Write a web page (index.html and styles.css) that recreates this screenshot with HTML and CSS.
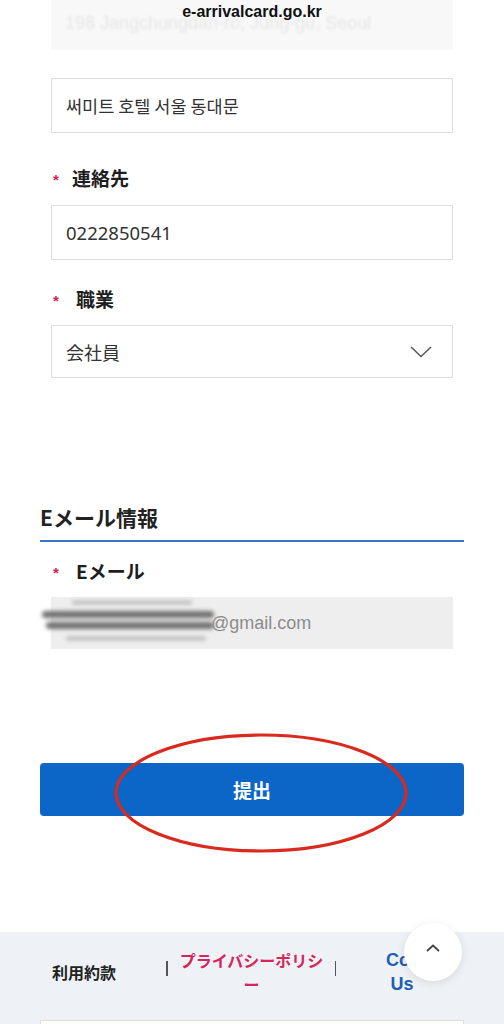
FILE: index.html
```html
<!DOCTYPE html>
<html lang="ja">
<head>
<meta charset="utf-8">
<link rel="stylesheet" href="styles.css">
</head>
<body>
<div class="url-bar">e-arrivalcard.go.kr</div>
<main class="page">
  <div class="fields">
    <div class="field field-disabled"><span class="faded">198 Jangchungdan-ro, Jung-gu, Seoul</span></div>
    <div class="field field-first"><span class="kr">써미트 호텔 서울 동대문</span></div>

    <div class="label label-contact"><span class="req">*</span><span>連絡先</span></div>
    <div class="field"><span class="num">0222850541</span></div>

    <div class="label label-job"><span class="req">*</span><span class="job-text">職業</span></div>
    <div class="field field-select">
      <span>会社員</span>
      <svg class="chev" width="22" height="12" viewBox="0 0 22 12"><path d="M1 1 L11 10.5 L21 1" fill="none" stroke="#5a5a5a" stroke-width="1.6"/></svg>
    </div>
  </div>

  <h2 class="section-title">Eメール情報</h2>

  <div class="fields">
    <div class="label label-email"><span class="req">*</span><span class="email-text">Eメール</span></div>
    <div class="field field-email">
      <div class="smear">
        <span class="bar bar-faint bar-a"></span>
        <span class="bar bar-dark bar-b"></span>
        <span class="bar bar-dark bar-c"></span>
        <span class="bar bar-faint bar-d"></span>
      </div>
      <span class="email-domain">@gmail.com</span>
    </div>
  </div>

  <div class="submit-wrap">
    <button class="submit">提出</button>
    <svg class="circle-mark" width="300" height="124" viewBox="0 0 300 124"><ellipse cx="150" cy="62" rx="145" ry="58" fill="none" stroke="#d92a1e" stroke-width="3.2"/></svg>
  </div>
</main>

<footer class="footer">
  <div class="links">
    <a class="link link-terms">利用約款</a>
    <span class="sep sep-1"></span>
    <a class="link link-privacy">プライバシーポリシー</a>
    <span class="sep sep-2"></span>
    <a class="link link-contact">Contact Us</a>
  </div>
  <div class="bottom-box"></div>
  <button class="to-top"><svg width="16" height="10" viewBox="0 0 16 10"><path d="M2 8 L8 2.5 L14 8" fill="none" stroke="#444" stroke-width="1.8"/></svg></button>
</footer>
</body>
</html>
```

FILE: styles.css
```css
* { box-sizing: border-box; }
html, body { margin: 0; padding: 0; background: #ffffff; }
body {
  width: 504px;
  height: 1024px;
  overflow: hidden;
  position: relative;
  font-family: "Noto Sans CJK JP", "Noto Sans", sans-serif;
  color: #222;
}

.url-bar {
  position: absolute;
  top: 2px;
  left: 0;
  width: 504px;
  text-align: center;
  font-family: "Liberation Sans", Arial, sans-serif;
  font-weight: 700;
  font-size: 16px;
  line-height: 20px;
  color: #111;
  z-index: 5;
}

.page { padding: 0 40px; }
.fields { padding: 0 11px; }

.field {
  height: 55px;
  border: 1.5px solid #dedede;
  background: #fff;
  display: flex;
  align-items: center;
  padding: 0 14px;
  font-size: 18px;
  color: #333;
}
.field-disabled {
  height: 50px;
  border: none;
  background: #f8f8f8;
  padding-bottom: 4px;
}
.faded {
  font-family: "Liberation Sans", Arial, sans-serif;
  color: #e6e6e6;
  font-size: 18px;
  filter: blur(1.2px);
}
.field-first { margin-top: 28px; }
.kr { font-family: "Noto Sans CJK KR", sans-serif; font-size: 17.5px; }
.num { font-family: "Noto Sans", sans-serif; font-size: 18.5px; }

.label {
  display: flex;
  align-items: center;
  height: 28px;
  font-size: 19px;
  font-weight: 700;
  color: #1e1e1e;
}
.req {
  font-family: "Liberation Sans", Arial, sans-serif;
  color: #cf1f4e;
  font-size: 15px;
  font-weight: 700;
  width: 21px;
  padding-left: 2px;
  padding-top: 5px;
}
.label-contact { margin-top: 30px; margin-bottom: 14px; }
.label-job { margin-top: 24px; margin-bottom: 13px; }
.job-text { margin-left: 4px; }
.label-email { margin-top: 14px; margin-bottom: 13px; }
.email-text { margin-left: 4px; }

.field-select {
  height: 53px;
  justify-content: space-between;
  padding-right: 20px;
}
.chev { display: block; }

.section-title {
  margin: 124px 0 0;
  font-size: 21px;
  font-weight: 700;
  line-height: 30px;
  padding-bottom: 8px;
  border-bottom: 2px solid #3b74c4;
  color: #222;
}

.field-email {
  height: 52px;
  border: none;
  background: #eeeeee;
  padding: 0;
}
.smear {
  width: 174px;
  margin-left: -9px;
  margin-right: -5px;
  height: 52px;
  position: relative;
  filter: blur(2.2px);
  display: flex;
  flex-direction: column;
  padding-top: 4px;
}
.bar { display: block; border-radius: 4px; }
.bar-faint { height: 3px; background: #aaaaaa; }
.bar-dark { height: 7px; background: #6e6e6e; }
.bar-a { width: 120px; margin-left: 30px; }
.bar-b { width: 172px; margin-top: 7px; }
.bar-c { width: 168px; margin-top: 4px; margin-left: 4px; }
.bar-d { width: 140px; margin-top: 8px; margin-left: 24px; }
.email-domain {
  font-family: "Liberation Sans", Arial, sans-serif;
  font-size: 18px;
  color: #8c8c8c;
  position: relative;
}

.submit-wrap {
  margin-top: 114px;
  position: relative;
}
.submit {
  display: block;
  width: 100%;
  height: 53px;
  border: none;
  border-radius: 4px;
  background: #0b66c8;
  color: #fff;
  font-family: "Noto Sans CJK JP", sans-serif;
  font-size: 19px;
  font-weight: 700;
}
.circle-mark {
  position: absolute;
  left: 71px;
  top: -32px;
  pointer-events: none;
}

.footer {
  position: relative;
  margin-top: 116px;
  background: #eef2f6;
  padding: 16px 0 0;
  height: 92px;
}
.links {
  display: flex;
  align-items: center;
}
.link {
  display: block;
  text-align: center;
  font-size: 16px;
  font-weight: 700;
  line-height: 24px;
}
.link-terms { width: 88px; margin-left: 40px; color: #222; font-weight: 600; }
.sep {
  display: block;
  width: 1.5px;
  height: 15px;
  background: #555;
  margin-top: -8px;
}
.sep-1 { margin-left: 38px; }
.link-privacy { width: 150px; margin-left: 9px; color: #d5255a; }
.sep-2 { margin-left: 8px; }
.link-contact {
  width: 32px;
  margin-left: 50px;
  color: #1f5eb3;
  font-family: "Liberation Sans", Arial, sans-serif;
  font-size: 18px;
}
.bottom-box {
  margin: 24px 40px 0;
  height: 20px;
  background: #fff;
  border: 1px solid #dcdcdc;
}
.to-top {
  position: absolute;
  top: -9px;
  left: 404px;
  width: 58px;
  height: 58px;
  border-radius: 50%;
  border: none;
  background: #fff;
  box-shadow: 0 2px 10px rgba(0,0,0,0.10);
  display: flex;
  align-items: center;
  justify-content: center;
  padding: 0 0 8px;
}
```
